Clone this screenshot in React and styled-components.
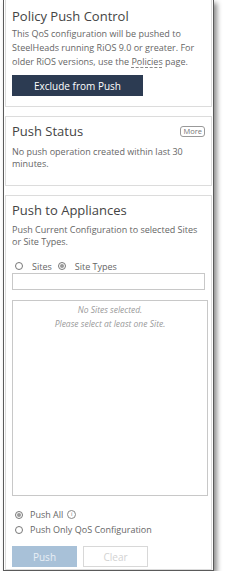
import React from "react";
import styled, { createGlobalStyle } from "styled-components";

const GlobalStyle = createGlobalStyle`
  body {
    margin: 0;
    background: #ffffff;
    font-family: "Open Sans", "Liberation Sans", sans-serif;
    color: #555;
  }
`;

const Panel = styled.div`
  margin-left: 3px;
  width: 211px;
  height: 571px;
  border: 1px solid #5a5a5a;
  border-top: none;
  background: #fff;
  box-shadow: 3px 3px 5px rgba(0, 0, 0, 0.45);
  padding: 0 1px;
  display: flex;
  flex-direction: column;
  gap: 9px;
  box-sizing: border-box;
`;

const Section = styled.section`
  border: 1px solid #dcdcdc;
  border-top: ${(p) => (p.$first ? "none" : "1px solid #dcdcdc")};
  padding: ${(p) => p.$pad || "5px"} 6px 0;
  height: ${(p) => p.$height};
  flex: ${(p) => (p.$grow ? 1 : "none")};
  box-sizing: border-box;
  display: flex;
  flex-direction: column;
`;

const TitleRow = styled.div`
  display: flex;
  align-items: center;
  justify-content: space-between;
`;

const Title = styled.h2`
  margin: 0;
  font-size: 13px;
  font-weight: 400;
  color: #444;
  line-height: 18px;
`;

const MoreButton = styled.span`
  font-size: 7.5px;
  color: #777;
  border: 1px solid #999;
  border-radius: 3px;
  padding: 0 2px;
  line-height: 9px;
`;

const Text = styled.p`
  margin: ${(p) => p.$top || "6px"} 0 0;
  font-size: 9px;
  line-height: ${(p) => p.$lh || "12px"};
  color: #666;
`;

const Link = styled.span`
  text-decoration: underline dashed #888;
  text-underline-offset: 2px;
`;

const DarkButton = styled.button`
  margin-top: 6px;
  width: 131px;
  height: 21px;
  background: #2c3b52;
  color: #fff;
  border: none;
  font-family: inherit;
  font-size: 10px;
  padding: 0;
`;

const RadioRow = styled.div`
  display: flex;
  align-items: center;
  margin-top: ${(p) => p.$top || "0"};
  padding-left: 3px;
  font-size: 9px;
  color: #666;
  height: ${(p) => p.$height || "15px"};
`;

const Choice = styled.label`
  display: flex;
  align-items: center;
  gap: ${(p) => p.$gap || "7px"};
  margin-right: 6px;
`;

const Radio = styled.span`
  width: 6px;
  height: 6px;
  border: 1px solid #777;
  border-radius: 50%;
  display: inline-flex;
  align-items: center;
  justify-content: center;
  &::after {
    content: "";
    width: 4px;
    height: 4px;
    border-radius: 50%;
    background: ${(p) => (p.$checked ? "#999" : "transparent")};
  }
`;

const Input = styled.div`
  margin-top: 1px;
  height: 17px;
  width: 193px;
  border: 1px solid #c8c8c8;
  box-sizing: border-box;
`;

const ListBox = styled.div`
  margin-top: 10px;
  width: 196px;
  height: 196px;
  flex: none;
  border: 1px solid #c8c8c8;
  box-sizing: border-box;
  text-align: center;
  font-size: 8.5px;
  font-style: italic;
  color: #9a9a9a;
  line-height: 14px;
  padding-top: 2px;
`;

const InfoIcon = styled.span`
  width: 7px;
  height: 7px;
  border: 1px solid #888;
  border-radius: 50%;
  font-size: 6px;
  line-height: 7px;
  text-align: center;
  color: #777;
  margin-left: -2px;
`;

const ButtonRow = styled.div`
  display: flex;
  gap: 6px;
  margin-top: 9px;
`;

const Button = styled.button`
  width: 65px;
  height: 21px;
  font-family: inherit;
  font-size: 10px;
  padding: 0;
  background: ${(p) => (p.$primary ? "#a8c1d8" : "#fff")};
  color: ${(p) => (p.$primary ? "#e8eff6" : "#d2d2d2")};
  border: ${(p) => (p.$primary ? "none" : "1px solid #d8d8d8")};
`;

export default function App() {
  return (
    <>
      <GlobalStyle />
      <Panel>
        <Section $first $pad="7px" $height="107px">
          <Title>Policy Push Control</Title>
          <Text $top="2px" $lh="14px">
            This QoS configuration will be pushed to SteelHeads running RiOS
            9.0 or greater. For older RiOS versions, use the{" "}
            <Link>Policies</Link> page.
          </Text>
          <DarkButton>Exclude from Push</DarkButton>
        </Section>
        <Section $height="70px">
          <TitleRow>
            <Title>Push Status</Title>
            <MoreButton>More</MoreButton>
          </TitleRow>
          <Text>No push operation created within last 30 minutes.</Text>
        </Section>
        <Section $grow>
          <Title>Push to Appliances</Title>
          <Text $top="5px">
            Push Current Configuration to selected Sites or Site Types.
          </Text>
          <RadioRow $top="12px" $height="12px">
            <Choice $gap="9px">
              <Radio />
              Sites
            </Choice>
            <Choice $gap="9px">
              <Radio $checked />
              Site Types
            </Choice>
          </RadioRow>
          <Input />
          <ListBox>
            No Sites selected.
            <br />
            Please select at least one Site.
          </ListBox>
          <RadioRow $top="11px">
            <Choice>
              <Radio $checked />
              Push All
            </Choice>
            <InfoIcon>i</InfoIcon>
          </RadioRow>
          <RadioRow>
            <Choice>
              <Radio />
              Push Only QoS Configuration
            </Choice>
          </RadioRow>
          <ButtonRow>
            <Button $primary>Push</Button>
            <Button>Clear</Button>
          </ButtonRow>
        </Section>
      </Panel>
    </>
  );
}
